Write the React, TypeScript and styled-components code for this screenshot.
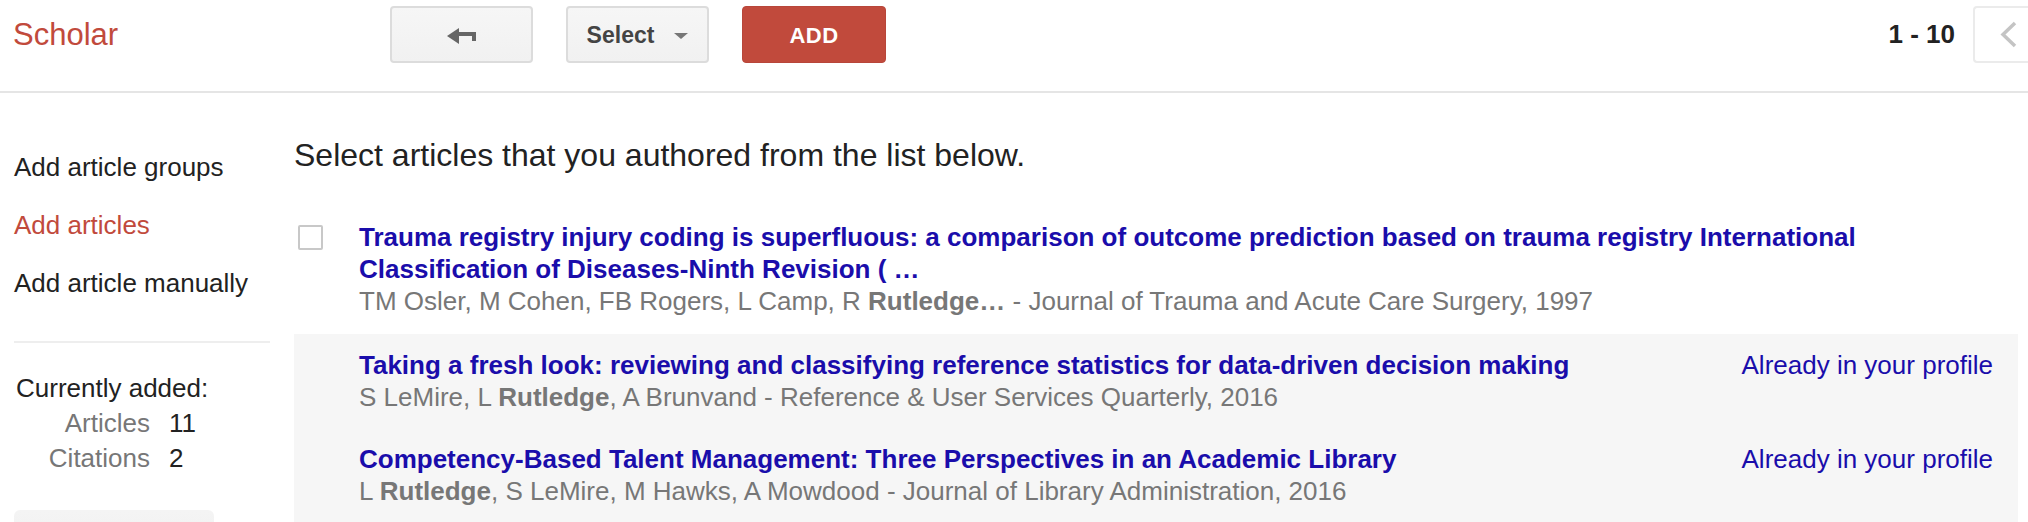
import React from "react";
import styled, { createGlobalStyle } from "styled-components";

const GlobalStyle = createGlobalStyle`
  html, body {
    margin: 0;
    padding: 0;
    background: #ffffff;
  }
  body {
    width: 2028px;
    height: 522px;
    overflow: hidden;
    font-family: "Liberation Sans", Arial, Helvetica, sans-serif;
    color: #222222;
  }
  * { box-sizing: border-box; }
`;

const FONT = `"Liberation Sans", Arial, Helvetica, sans-serif`;
const RED = "#c14a3c";
const LINK = "#1a0dab";
const GRAY = "#777777";

const Page = styled.div`
  width: 2028px;
  height: 522px;
  overflow: hidden;
  font-family: ${FONT};
`;

const Header = styled.header`
  display: flex;
  align-items: flex-start;
  height: 93px;
  padding-top: 6px;
  border-bottom: 2px solid #e5e5e5;
  overflow: hidden;
`;

const Logo = styled.div`
  flex: 0 0 390px;
  padding-left: 13px;
  font-size: 31px;
  line-height: 58px;
  color: ${RED};
`;

const Toolbar = styled.div`
  display: flex;
  gap: 33px;
`;

const GrayButton = styled.button`
  display: flex;
  align-items: center;
  justify-content: center;
  gap: 20px;
  width: 143px;
  height: 57px;
  padding: 2px 0 0;
  border: 2px solid #dcdcdc;
  border-radius: 4px;
  background: linear-gradient(#f6f6f6, #f1f1f1);
  font-family: ${FONT};
  font-weight: bold;
  font-size: 23px;
  color: #444444;
`;

const RedButton = styled.button`
  width: 144px;
  height: 57px;
  padding: 2px 0 0;
  border: 1px solid #b8463a;
  border-radius: 4px;
  background: ${RED};
  font-family: ${FONT};
  font-weight: bold;
  font-size: 22px;
  letter-spacing: 0.5px;
  color: #ffffff;
`;

const Caret = styled.span`
  width: 0;
  height: 0;
  border-left: 7px solid transparent;
  border-right: 7px solid transparent;
  border-top: 6px solid #777777;
  margin-top: 1px;
`;

const PageCount = styled.div`
  margin-left: auto;
  font-size: 26px;
  font-weight: bold;
  line-height: 57px;
  color: #222222;
`;

const PagerButton = styled.button`
  flex: 0 0 55px;
  width: 55px;
  height: 57px;
  margin-left: 18px;
  padding: 0 0 0 25px;
  display: flex;
  align-items: center;
  border: 2px solid #ebebeb;
  border-right: none;
  border-radius: 4px 0 0 4px;
  background: #ffffff;
`;

const Body = styled.div`
  display: flex;
  align-items: flex-start;
`;

const Sidebar = styled.aside`
  flex: 0 0 256px;
  margin-left: 14px;
  padding-top: 45px;
`;

const NavList = styled.nav`
  display: flex;
  flex-direction: column;
`;

const NavItem = styled.a<{ $active?: boolean }>`
  font-size: 26px;
  line-height: 58px;
  color: ${(p) => (p.$active ? RED : "#222222")};
  text-decoration: none;
  white-space: nowrap;
`;

const Divider = styled.hr`
  margin: 29px 0 0;
  border: none;
  height: 2px;
  background: #eeeeee;
`;

const Summary = styled.div`
  margin-top: 28px;
  padding-left: 2px;
  font-size: 26px;
  line-height: 35px;
`;

const SummaryTitle = styled.div`
  color: #222222;
`;

const StatsGrid = styled.div`
  display: grid;
  grid-template-columns: 134px auto;
  column-gap: 19px;
`;

const StatLabel = styled.span`
  text-align: right;
  color: ${GRAY};
`;

const StatValue = styled.span`
  color: #222222;
`;

const SideButton = styled.div`
  margin-top: 34px;
  width: 200px;
  height: 57px;
  border-radius: 6px;
  background: linear-gradient(#f4f4f4, #f0f0f0);
`;

const Main = styled.main`
  flex: 1;
  margin-left: 24px;
  margin-right: 10px;
  padding-top: 42px;
`;

const Heading = styled.h1`
  margin: 0 0 31px;
  font-size: 32px;
  line-height: 40px;
  font-weight: normal;
  color: #222222;
`;

const List = styled.div`
  display: flex;
  flex-direction: column;
`;

const Row = styled.div<{ $shaded?: boolean }>`
  display: flex;
  align-items: flex-start;
  padding: 15px 25px 15px 4px;
  margin-bottom: ${(p) => (p.$shaded ? "0" : "2px")};
  background: ${(p) => (p.$shaded ? "#f6f6f6" : "transparent")};
`;

const CheckCell = styled.div`
  flex: 0 0 61px;
  padding-top: 4px;
`;

const Checkbox = styled.span`
  display: block;
  width: 25px;
  height: 25px;
  border: 2px solid #c8c8c8;
  border-radius: 2px;
  background: #ffffff;
`;

const Info = styled.div`
  flex: 1;
  min-width: 0;
`;

const Title = styled.a`
  display: block;
  font-size: 26px;
  line-height: 32px;
  font-weight: bold;
  color: ${LINK};
  text-decoration: none;
`;

const Meta = styled.div`
  font-size: 26px;
  line-height: 32px;
  color: ${GRAY};
  white-space: nowrap;
  b {
    font-weight: bold;
  }
`;

const Status = styled.a`
  flex: 0 0 auto;
  padding-left: 40px;
  font-size: 26px;
  line-height: 32px;
  color: ${LINK};
  text-decoration: none;
  white-space: nowrap;
`;

const BackIcon = () => (
  <svg width="29" height="16" viewBox="0 0 29 16" aria-hidden="true">
    <polygon points="0,8 12,0 12,16" fill="#666666" />
    <rect x="12" y="4" width="17" height="4" fill="#666666" />
    <rect x="25" y="4" width="4" height="9" fill="#666666" />
  </svg>
);

const ChevronLeft = () => (
  <svg width="18" height="27" viewBox="0 0 18 27" aria-hidden="true">
    <polyline
      points="15,2 3,13.5 15,25"
      fill="none"
      stroke="#c4c4c4"
      strokeWidth="3.5"
    />
  </svg>
);

type Article = {
  title: string;
  authors: React.ReactNode;
  status?: string;
  selectable?: boolean;
};

const articles: Article[] = [
  {
    title:
      "Trauma registry injury coding is superfluous: a comparison of outcome prediction based on trauma registry International Classification of Diseases-Ninth Revision ( …",
    authors: (
      <>
        TM Osler, M Cohen, FB Rogers, L Camp, R <b>Rutledge…</b> - Journal of Trauma and Acute Care
        Surgery, 1997
      </>
    ),
    selectable: true,
  },
  {
    title:
      "Taking a fresh look: reviewing and classifying reference statistics for data-driven decision making",
    authors: (
      <>
        S LeMire, L <b>Rutledge</b>, A Brunvand - Reference &amp; User Services Quarterly, 2016
      </>
    ),
    status: "Already in your profile",
  },
  {
    title: "Competency-Based Talent Management: Three Perspectives in an Academic Library",
    authors: (
      <>
        L <b>Rutledge</b>, S LeMire, M Hawks, A Mowdood - Journal of Library Administration, 2016
      </>
    ),
    status: "Already in your profile",
  },
];

export default function App() {
  return (
    <Page>
      <GlobalStyle />
      <Header>
        <Logo>Scholar</Logo>
        <Toolbar>
          <GrayButton aria-label="Back">
            <BackIcon />
          </GrayButton>
          <GrayButton>
            Select
            <Caret />
          </GrayButton>
          <RedButton>ADD</RedButton>
        </Toolbar>
        <PageCount>1 - 10</PageCount>
        <PagerButton aria-label="Previous">
          <ChevronLeft />
        </PagerButton>
      </Header>
      <Body>
        <Sidebar>
          <NavList>
            <NavItem>Add article groups</NavItem>
            <NavItem $active>Add articles</NavItem>
            <NavItem>Add article manually</NavItem>
          </NavList>
          <Divider />
          <Summary>
            <SummaryTitle>Currently added:</SummaryTitle>
            <StatsGrid>
              <StatLabel>Articles</StatLabel>
              <StatValue>11</StatValue>
              <StatLabel>Citations</StatLabel>
              <StatValue>2</StatValue>
            </StatsGrid>
          </Summary>
          <SideButton />
        </Sidebar>
        <Main>
          <Heading>Select articles that you authored from the list below.</Heading>
          <List>
            {articles.map((a, i) => (
              <Row key={i} $shaded={!a.selectable}>
                <CheckCell>{a.selectable && <Checkbox />}</CheckCell>
                <Info>
                  <Title>{a.title}</Title>
                  <Meta>{a.authors}</Meta>
                </Info>
                {a.status && <Status>{a.status}</Status>}
              </Row>
            ))}
          </List>
        </Main>
      </Body>
    </Page>
  );
}
